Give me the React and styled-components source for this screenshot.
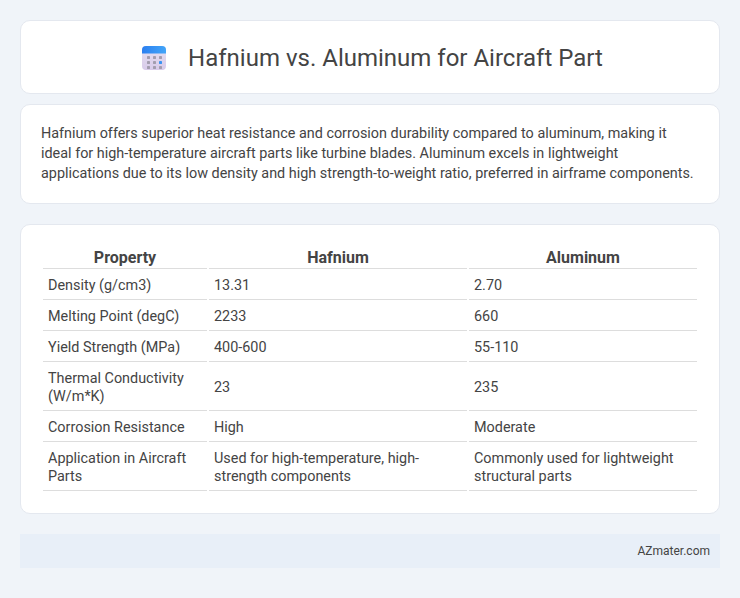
import React from "react";
import styled, { createGlobalStyle } from "styled-components";

const Global = createGlobalStyle`
  html, body { margin: 0; padding: 0; }
  body { background: #f0f4f9; font-family: Roboto, "Liberation Sans", sans-serif; color: #444; }
`;
const Page = styled.div`
  padding: 20px;
  display: flex;
  flex-direction: column;
`;
const Card = styled.section`
  background: #fff;
  border: 1px solid #e4e8ef;
  border-radius: 10px;
  box-sizing: border-box;
`;
const Header = styled(Card)`
  height: 74px;
  display: flex;
  align-items: center;
  justify-content: center;
  gap: 22px;
  padding: 2px 0 0 5px;
`;
const Title = styled.h1`
  margin: 0;
  font-size: 24px;
  font-weight: 400;
  color: #444;
  line-height: 28px;
`;
const Summary = styled(Card)`
  margin-top: 10px;
  height: 100px;
  padding: 19px 20px 20px;
  font-size: 14.4px;
  line-height: 20px;
  color: #444;
  margin-bottom: 20px;
`;
const TableCard = styled(Card)`
  padding: 20px;
  height: 290px;
`;
const Table = styled.table`
  width: 658px;
  border-collapse: separate;
  border-spacing: 2px;
  font-size: 14.4px;
  line-height: 18px;
  table-layout: fixed;
`;
const Th = styled.th`
  font-weight: 700;
  font-size: 16px;
  color: #444;
  padding: 1px 0 0;
  line-height: 20px;
  text-align: center;
  border-bottom: 1px solid #ddd;
`;
const Td = styled.td`
  padding: 6px 5px 4px;
  border-bottom: 1px solid #ddd;
  vertical-align: middle;
  color: #444;
`;
const Footer = styled.footer`
  margin-top: 20px;
  height: 34px;
  background: #e8eff8;
  font-size: 12px;
  color: #444;
  display: flex;
  align-items: center;
  justify-content: flex-end;
  padding-right: 10px;
`;

const CalendarIcon = () => (
  <svg width="24" height="24" viewBox="0 0 24 24" aria-hidden="true">
    <defs>
      <linearGradient id="calBody" x1="0" y1="0" x2="0" y2="1">
        <stop offset="0" stopColor="#e6e0f0" />
        <stop offset="1" stopColor="#d8cbea" />
      </linearGradient>
      <linearGradient id="calTop" x1="0" y1="0" x2="1" y2="0">
        <stop offset="0" stopColor="#2b7ff0" />
        <stop offset="1" stopColor="#42a5f8" />
      </linearGradient>
    </defs>
    <rect x="0" y="0" width="24" height="24" rx="4" fill="url(#calBody)" />
    <path d="M0 7.5V4a4 4 0 0 1 4-4h16a4 4 0 0 1 4 4v3.5z" fill="url(#calTop)" />
    {[10, 15, 20].map((y) =>
      [5, 11, 17].map((x) => (
        <rect key={`${x}-${y}`} x={x} y={y} width="3" height="3" rx=".4"
          fill={x === 17 && y === 15 ? "#3b93f2" : "#a39daf"} />
      ))
    )}
  </svg>
);

const rows = [
  ["Density (g/cm3)", "13.31", "2.70"],
  ["Melting Point (degC)", "2233", "660"],
  ["Yield Strength (MPa)", "400-600", "55-110"],
  ["Thermal Conductivity (W/m*K)", "23", "235"],
  ["Corrosion Resistance", "High", "Moderate"],
  ["Application in Aircraft Parts", "Used for high-temperature, high-strength components", "Commonly used for lightweight structural parts"],
];

export default function App() {
  return (
    <Page>
      <Global />
      <Header>
        <CalendarIcon />
        <Title>Hafnium vs. Aluminum for Aircraft Part</Title>
      </Header>
      <Summary>
        Hafnium offers superior heat resistance and corrosion durability compared to aluminum, making it ideal for high-temperature aircraft parts like turbine blades. Aluminum excels in lightweight applications due to its low density and high strength-to-weight ratio, preferred in airframe components.
      </Summary>
      <TableCard>
        <Table>
          <colgroup>
            <col style={{ width: "164px" }} />
            <col style={{ width: "258px" }} />
            <col />
          </colgroup>
          <thead>
            <tr><Th>Property</Th><Th>Hafnium</Th><Th>Aluminum</Th></tr>
          </thead>
          <tbody>
            {rows.map((r) => (
              <tr key={r[0]}>{r.map((c, i) => <Td key={i}>{c}</Td>)}</tr>
            ))}
          </tbody>
        </Table>
      </TableCard>
      <Footer>AZmater.com</Footer>
    </Page>
  );
}
